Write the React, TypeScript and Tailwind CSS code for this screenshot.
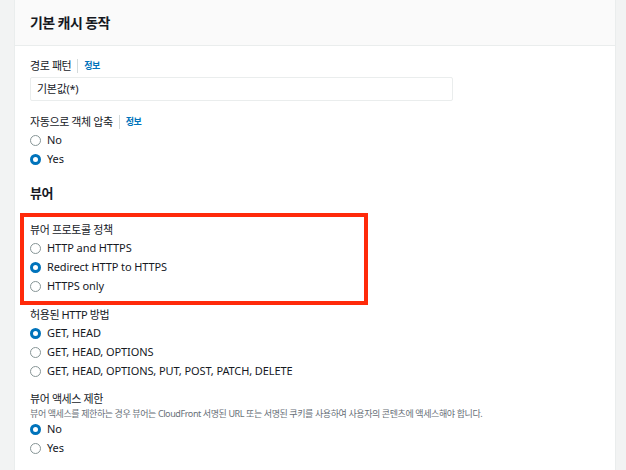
import React from "react";

const FONT = '"Noto Sans", "Noto Sans CJK KR", sans-serif';

function Radio({ checked }: { checked?: boolean }) {
  return checked ? (
    <span className="box-border inline-block h-[11px] w-[11px] shrink-0 rounded-full border-[3.5px] border-[#0073bb] bg-white" />
  ) : (
    <span className="box-border inline-block h-[11px] w-[11px] shrink-0 rounded-full border border-[#879596] bg-white" />
  );
}

function Option({ label, checked }: { label: string; checked?: boolean }) {
  return (
    <div className="flex h-[19px] items-center gap-[6px] text-[11px] tracking-[-0.1px] text-[#16191f]">
      <Radio checked={checked} />
      <span>{label}</span>
    </div>
  );
}

function Label({ text, info }: { text: string; info?: boolean }) {
  return (
    <div className="flex h-[18px] items-center text-[11px] tracking-[-0.4px] text-[#16191f]">
      <span>{text}</span>
      {info && (
        <>
          <span className="mx-[6px] h-[14px] w-px bg-[#d5dbdb]" />
          <span className="text-[9px] font-bold tracking-[-0.5px] text-[#0073bb]">정보</span>
        </>
      )}
    </div>
  );
}

export default function App() {
  return (
    <div className="h-[470px] w-[626px] overflow-hidden bg-[#f2f3f3]" style={{ fontFamily: FONT }}>
      <div className="ml-[14px] h-full w-[602px] border-x border-[#eaeded] bg-white">
        <div className="flex h-[46px] items-center border-b border-[#eaeded] bg-[#fafafa] px-[15px]">
          <h2 className="text-[14px] font-bold tracking-[-0.6px] text-[#16191f]">기본 캐시 동작</h2>
        </div>

        <div className="px-[15px] pt-[11px]">
          <Label text="경로 패턴" info />
          <div className="mt-[2px] flex h-[24px] w-[423px] items-center rounded-[2px] border border-[#eaeded] px-[6px] text-[11px] tracking-[-0.3px] text-[#16191f]">
            기본값(*)
          </div>

          <div className="mt-[12px]">
            <Label text="자동으로 객체 압축" info />
            <Option label="No" />
            <Option label="Yes" checked />
          </div>

          <div className="mt-[14px] flex h-[22px] items-center text-[13px] font-bold tracking-[-0.5px] text-[#16191f]">
            뷰어
          </div>

          <div className="-ml-[10px] mt-[8px] w-[348px] border-4 border-[#ff2a0a] pb-[5px] pl-[6px] pt-[4px]">
            <Label text="뷰어 프로토콜 정책" />
            <Option label="HTTP and HTTPS" />
            <Option label="Redirect HTTP to HTTPS" checked />
            <Option label="HTTPS only" />
          </div>

          <div className="mt-[1px]">
            <Label text="허용된 HTTP 방법" />
            <Option label="GET, HEAD" checked />
            <Option label="GET, HEAD, OPTIONS" />
            <Option label="GET, HEAD, OPTIONS, PUT, POST, PATCH, DELETE" />
          </div>

          <div className="mt-[9px]">
            <Label text="뷰어 액세스 제한" />
            <div className="flex h-[12px] items-center whitespace-nowrap text-[9px] tracking-[-0.4px] text-[#687078]">
              뷰어 액세스를 제한하는 경우 뷰어는 CloudFront 서명된 URL 또는 서명된 쿠키를 사용하여 사용자의 콘텐츠에 액세스해야 합니다.
            </div>
            <div>
              <Option label="No" checked />
              <Option label="Yes" />
            </div>
          </div>
        </div>
      </div>
    </div>
  );
}
